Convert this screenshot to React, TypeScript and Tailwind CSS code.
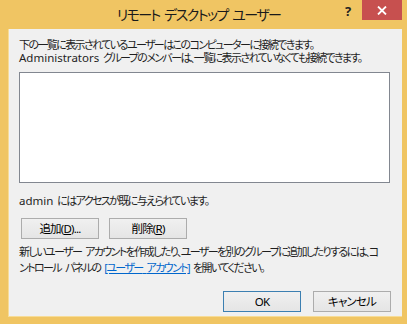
import React from 'react';

const font = "[font-family:'Noto_Sans','Noto_Sans_CJK_JP',sans-serif] [font-feature-settings:'palt']";

const Sp: React.FC = () => <span className="tracking-[1px]"> </span>;

const Btn: React.FC<{ children: React.ReactNode; primary?: boolean; className?: string }> = ({ children, primary, className }) => (
  <button
    className={`h-[21px] w-[78px] flex items-center justify-center text-[11.5px] tracking-[-0.8px] text-black bg-gradient-to-b from-[#f0f0f0] to-[#e5e5e5] border ${
      primary ? 'border-[#3c7fb1]' : 'border-[#acacac]'
    } ${className ?? ''}`}
  >
    {children}
  </button>
);

const App: React.FC = () => {
  return (
    <div className={`w-[407px] h-[324px] bg-[#f0c563] flex flex-col ${font}`}>
      {/* Title bar */}
      <div className="h-[29px] relative flex items-center justify-center pr-[10px]">
        <span className="text-[14px] text-[#1a1a1a] tracking-[-1.6px] -mt-[1px] whitespace-nowrap">
          リモート<Sp />デスクトップ<Sp />ユーザー
        </span>
        <span className="absolute left-[345px] top-[2px] text-[13px] font-bold text-[#222]">?</span>
        <div className="absolute left-[362px] top-0 w-[40px] h-[20px] bg-[#c7504f] flex items-center justify-center">
          <svg width="10" height="9" viewBox="0 0 10 9">
            <path d="M1 0.5 L9 8.5 M9 0.5 L1 8.5" stroke="#fff" strokeWidth="1.8" />
          </svg>
        </div>
      </div>

      {/* Client area */}
      <div className="ml-[8px] w-[394px] h-[288px] bg-[#f0f0f0] border-[#f7dc97] border-l border-b flex flex-col px-[10px] text-[11px] text-[#1e1e1e] tracking-[-1.6px] whitespace-nowrap">
        <div className="mt-[9px] leading-[13px]">
          <p>下の一覧に表示されているユーザーはこのコンピューターに接続できます。</p>
          <p>
            <span className="tracking-[0px] text-[11.5px]">Administrators</span>
            <Sp />グループのメンバーは、一覧に表示されていなくても接続できます。
          </p>
        </div>

        <div className="mt-[8px] w-[371px] h-[111px] bg-white border border-[#828790]" />

        <p className="mt-[11px] leading-[13px]">
          <span className="tracking-[0px] text-[11.5px]">admin</span>
          <Sp />にはアクセスが既に与えられています。
        </p>

        <div className="mt-[11px] flex gap-[10px] pl-[2px]">
          <Btn className="w-[76px] h-[19px]">
            追加(<span className="underline">D</span>)...
          </Btn>
          <Btn className="w-[77px] h-[19px]">
            削除(<span className="underline">R</span>)
          </Btn>
        </div>

        <div className="mt-[5px] leading-[16px]">
          <p>
            新しいユーザー<Sp />アカウントを作成したり、ユーザーを別のグループに追加したりするには、コ
          </p>
          <p>
            ントロール<Sp />パネルの<Sp />
            <span className="text-[#0066cc] underline">
              [ユーザー<Sp />アカウント]
            </span>
            <Sp />を開いてください。
          </p>
        </div>

        <div className="mt-auto mb-[4px] flex justify-end gap-[12px] pr-[1px]">
          <Btn primary>OK</Btn>
          <Btn>キャンセル</Btn>
        </div>
      </div>
    </div>
  );
};

export default App;
